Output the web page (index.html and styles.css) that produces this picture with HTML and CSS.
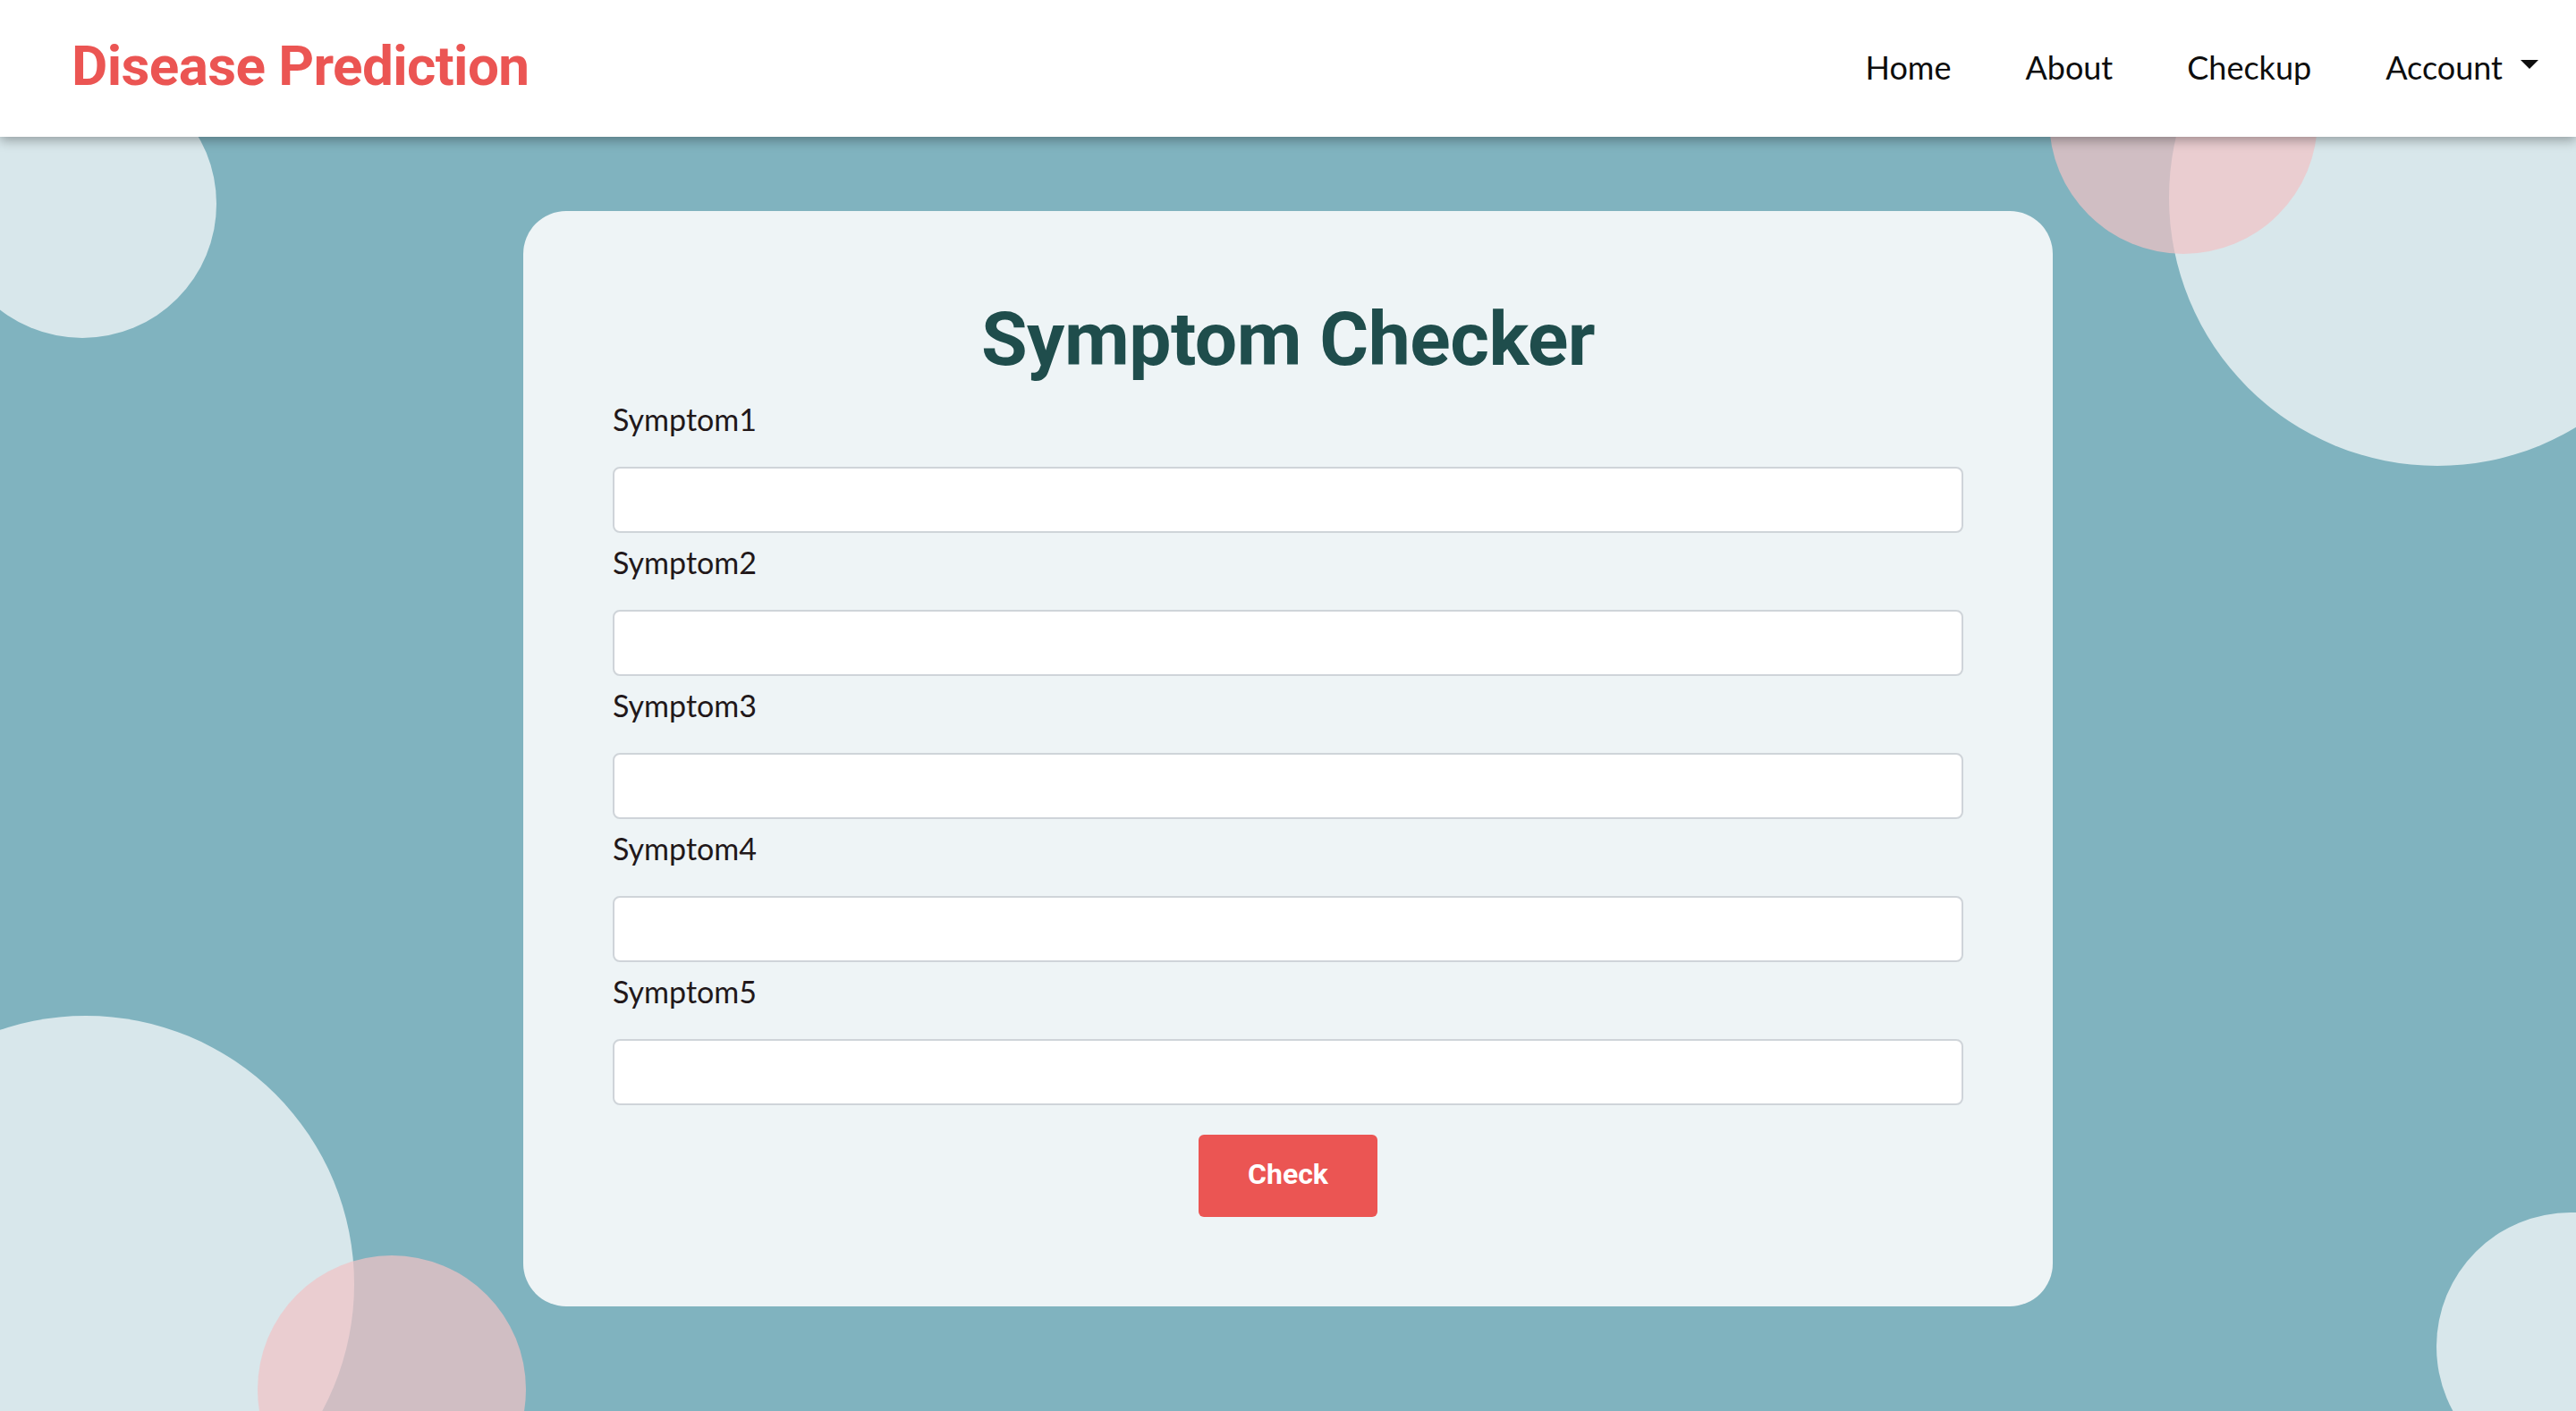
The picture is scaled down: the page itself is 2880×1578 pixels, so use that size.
FILE: index.html
```html
<!DOCTYPE html>
<html lang="en">
<head>
<meta charset="utf-8">
<title>Symptom Checker</title>
<link rel="stylesheet" href="styles.css">
</head>
<body>
<div class="page">
  <div class="decor" aria-hidden="true">
    <span class="blob light b1"></span>
    <span class="blob light b2"></span>
    <span class="blob light b4"></span>
    <span class="blob light b6"></span>
    <span class="blob pink b3"></span>
    <span class="blob pink b5"></span>
  </div>

  <nav class="navbar">
    <a class="brand" href="#">Disease Prediction</a>
    <ul class="nav-links">
      <li><a href="#">Home</a></li>
      <li><a href="#">About</a></li>
      <li><a href="#">Checkup</a></li>
      <li><a href="#" class="dropdown">Account<span class="caret"></span></a></li>
    </ul>
  </nav>

  <main class="main">
    <section class="card">
      <h1 class="title">Symptom Checker</h1>
      <form class="form">
        <div class="group">
          <label for="s1">Symptom1</label>
          <input id="s1" type="text">
        </div>
        <div class="group">
          <label for="s2">Symptom2</label>
          <input id="s2" type="text">
        </div>
        <div class="group">
          <label for="s3">Symptom3</label>
          <input id="s3" type="text">
        </div>
        <div class="group">
          <label for="s4">Symptom4</label>
          <input id="s4" type="text">
        </div>
        <div class="group">
          <label for="s5">Symptom5</label>
          <input id="s5" type="text">
        </div>
        <div class="actions">
          <button type="button" class="btn">Check</button>
        </div>
      </form>
    </section>
  </main>
</div>
</body>
</html>
```
FILE: styles.css
```css
* { box-sizing: border-box; }

html, body {
  margin: 0;
  padding: 0;
}

body {
  background: #80b3bf;
  font-family: Lato, "Open Sans", sans-serif;
  color: #22181a;
}

.page {
  position: relative;
  min-height: 100vh;
  overflow: hidden;
}

/* decorative circles */
.decor {
  position: absolute;
  inset: 0;
  z-index: 0;
  pointer-events: none;
}

.blob {
  position: absolute;
  border-radius: 50%;
}

.light { background: rgba(255, 255, 255, 0.69); }
.pink  { background: rgba(241, 195, 197, 0.71); }

.b1 { width: 300px; height: 300px; left: -58px;  top: 78px; }
.b2 { width: 600px; height: 600px; left: 2425px; top: -79px; }
.b3 { width: 300px; height: 300px; left: 2291px; top: -16px; }
.b4 { width: 600px; height: 600px; left: -204px; top: 1136px; }
.b5 { width: 300px; height: 300px; left: 288px;  top: 1404px; }
.b6 { width: 300px; height: 300px; left: 2724px; top: 1356px; }

/* navbar */
.navbar {
  position: relative;
  z-index: 2;
  height: 153px;
  background: #ffffff;
  box-shadow: 0 4px 12px rgba(0, 0, 0, 0.32);
  display: flex;
  align-items: center;
  justify-content: space-between;
  padding: 0 42px 0 80px;
}

.brand {
  font-family: Roboto, "Liberation Sans", sans-serif;
  font-weight: 700;
  font-size: 62px;
  letter-spacing: -0.6px;
  line-height: 1;
  color: #eb5553;
  text-decoration: none;
  margin-top: -6px;
}

.nav-links {
  list-style: none;
  margin: -4px 0 0;
  padding: 0;
  display: flex;
  align-items: center;
  gap: 83px;
}

.nav-links a {
  font-family: Lato, sans-serif;
  font-size: 36px;
  line-height: 1;
  color: #0d0d0d;
  text-decoration: none;
  display: inline-flex;
  align-items: center;
}

.caret {
  display: inline-block;
  width: 0;
  height: 0;
  margin-left: 20px;
  margin-top: -6px;
  border-top: 10px solid #0d0d0d;
  border-left: 10.5px solid transparent;
  border-right: 10.5px solid transparent;
}

/* main card */
.main {
  position: relative;
  z-index: 1;
  padding: 83px 0 116px;
}

.card {
  width: 1710px;
  margin: 0 auto;
  background: #eef4f6;
  border-radius: 48px;
  padding: 93px 100px 100px;
}

.title {
  margin: 0 0 18px;
  text-align: center;
  font-family: Roboto, "Liberation Sans", sans-serif;
  font-weight: 700;
  font-size: 84px;
  line-height: 101px;
  letter-spacing: -0.5px;
  color: #1f4d4c;
}

.form {
  display: flex;
  flex-direction: column;
  gap: 12px;
}

.group {
  display: flex;
  flex-direction: column;
}

.group label {
  font-family: Lato, sans-serif;
  font-size: 34px;
  line-height: 41px;
  margin-bottom: 33px;
  color: #22181a;
}

.group input {
  width: 100%;
  height: 74px;
  background: #ffffff;
  border: 2px solid #cfd4d9;
  border-radius: 8px;
  padding: 0 24px;
  font-size: 32px;
  font-family: Lato, sans-serif;
  outline: none;
}

.actions {
  display: flex;
  justify-content: center;
  margin-top: 21px;
}

.btn {
  width: 200px;
  height: 92px;
  border: none;
  border-radius: 6px;
  background: #eb5553;
  color: #ffffff;
  font-family: Roboto, "Liberation Sans", sans-serif;
  font-weight: 700;
  font-size: 32px;
  padding: 0 0 4px;
  cursor: pointer;
}
```
